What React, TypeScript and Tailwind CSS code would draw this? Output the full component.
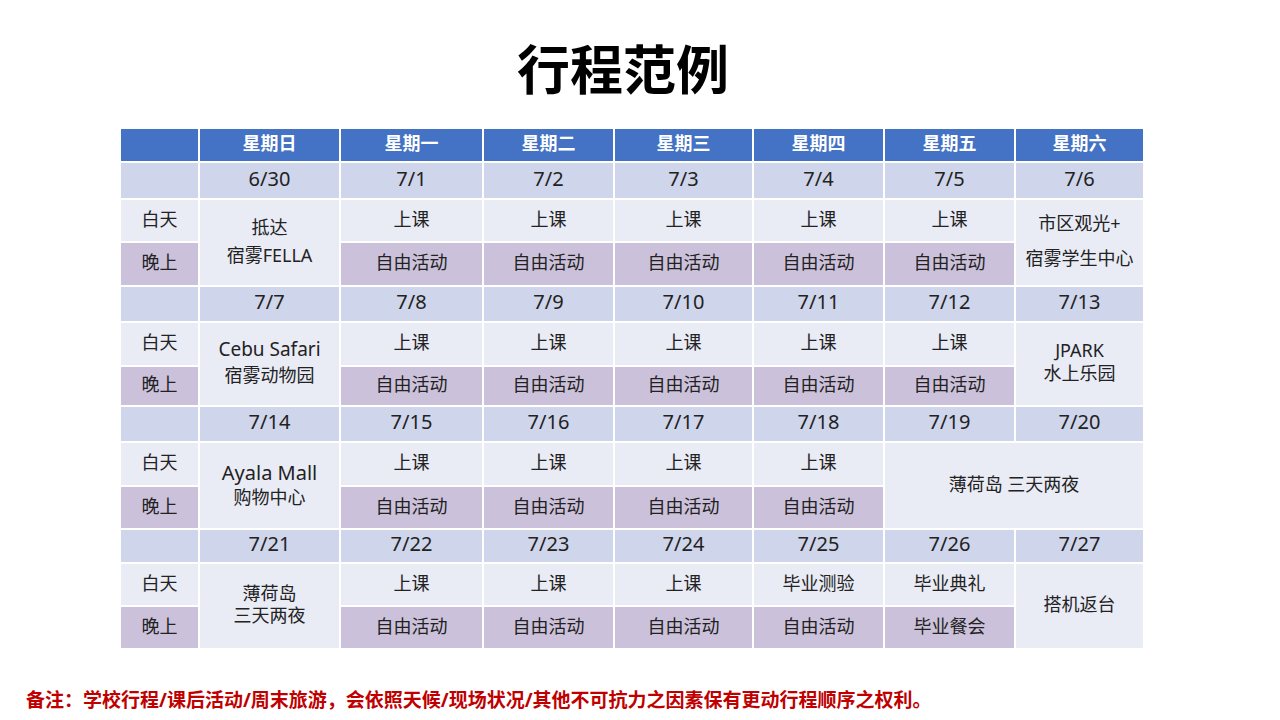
import React from "react";

const font = { fontFamily: '"Noto Sans", "Noto Sans CJK SC", sans-serif' };

function Cell({
  bg,
  children,
  className = "",
}: {
  bg: "head" | "date" | "day" | "night";
  children?: React.ReactNode;
  className?: string;
}) {
  const bgc =
    bg === "head"
      ? "bg-[#4472c4] text-white font-bold"
      : bg === "date"
      ? "bg-[#cfd5ea] text-[#222] text-[20px]"
      : bg === "day"
      ? "bg-[#e9ebf5] text-[#222] text-[18px]"
      : "bg-[#ccc1da] text-[#222] text-[18px]";
  return (
    <div
      className={`flex flex-col items-center justify-center pb-[4px] leading-[22px] text-center text-[18px] ${bgc} ${className}`}
    >
      {children}
    </div>
  );
}

export default function App() {
  const heads = ["", "星期日", "星期一", "星期二", "星期三", "星期四", "星期五", "星期六"];
  const dateRow = (dates: string[]) => (
    <>
      <Cell bg="date" />
      {dates.map((d) => (
        <Cell key={d} bg="date">
          <span className="text-[20px]">{d}</span>
        </Cell>
      ))}
    </>
  );
  const repeat = (n: number, text: string, bg: "day" | "night") =>
    Array.from({ length: n }).map((_, i) => (
      <Cell key={text + i} bg={bg}>
        {text}
      </Cell>
    ));

  return (
    <div className="w-[1280px] h-[720px] bg-white overflow-hidden flex flex-col" style={font}>
      <div className="mt-[40px] h-[60px] leading-[60px] text-center text-[53px] font-bold text-black pr-[34px]">
        行程范例
      </div>
      <div className="mt-[29px] ml-[121px] grid w-fit gap-[2px] bg-white grid-cols-[77px_139px_141px_129px_137px_129px_129px_127px] grid-rows-[32px_35px_41px_42px_34px_42px_38px_34px_42px_41px_32px_41px_41px]">
        {heads.map((h, i) => (
          <Cell key={"h" + i} bg="head">
            {h}
          </Cell>
        ))}

        {/* week 1 */}
        {dateRow(["6/30", "7/1", "7/2", "7/3", "7/4", "7/5", "7/6"])}
        <Cell bg="day">白天</Cell>
        <Cell bg="day" className="row-span-2 leading-[28px]">
          <span>抵达</span>
          <span>宿雾FELLA</span>
        </Cell>
        {repeat(5, "上课", "day")}
        <Cell bg="day" className="row-span-2 leading-[35px]">
          <span>市区观光+</span>
          <span>宿雾学生中心</span>
        </Cell>
        <Cell bg="night">晚上</Cell>
        {repeat(5, "自由活动", "night")}

        {/* week 2 */}
        {dateRow(["7/7", "7/8", "7/9", "7/10", "7/11", "7/12", "7/13"])}
        <Cell bg="day">白天</Cell>
        <Cell bg="day" className="row-span-2 leading-[26px]">
          <span className="text-[19px]">Cebu Safari</span>
          <span>宿雾动物园</span>
        </Cell>
        {repeat(5, "上课", "day")}
        <Cell bg="day" className="row-span-2 leading-[23px]">
          <span>JPARK</span>
          <span>水上乐园</span>
        </Cell>
        <Cell bg="night">晚上</Cell>
        {repeat(5, "自由活动", "night")}

        {/* week 3 */}
        {dateRow(["7/14", "7/15", "7/16", "7/17", "7/18", "7/19", "7/20"])}
        <Cell bg="day">白天</Cell>
        <Cell bg="day" className="row-span-2">
          <span className="block text-[20px] leading-[26px]">Ayala Mall</span>
          <span className="block leading-[22px]">购物中心</span>
        </Cell>
        {repeat(4, "上课", "day")}
        <Cell bg="day" className="row-span-2 col-span-2">
          薄荷岛 三天两夜
        </Cell>
        <Cell bg="night">晚上</Cell>
        {repeat(4, "自由活动", "night")}

        {/* week 4 */}
        {dateRow(["7/21", "7/22", "7/23", "7/24", "7/25", "7/26", "7/27"])}
        <Cell bg="day">白天</Cell>
        <Cell bg="day" className="row-span-2 leading-[21px]">
          <span>薄荷岛</span>
          <span>三天两夜</span>
        </Cell>
        {repeat(3, "上课", "day")}
        <Cell bg="day">毕业测验</Cell>
        <Cell bg="day">毕业典礼</Cell>
        <Cell bg="day" className="row-span-2">
          搭机返台
        </Cell>
        <Cell bg="night">晚上</Cell>
        {repeat(4, "自由活动", "night")}
        <Cell bg="night">毕业餐会</Cell>
      </div>
      <div className="mt-[40px] pl-[26px] h-[24px] leading-[24px] text-[19px] font-bold text-[#c00000] whitespace-nowrap">
        备注：学校行程/课后活动/周末旅游，会依照天候/现场状况/其他不可抗力之因素保有更动行程顺序之权利。
      </div>
    </div>
  );
}
